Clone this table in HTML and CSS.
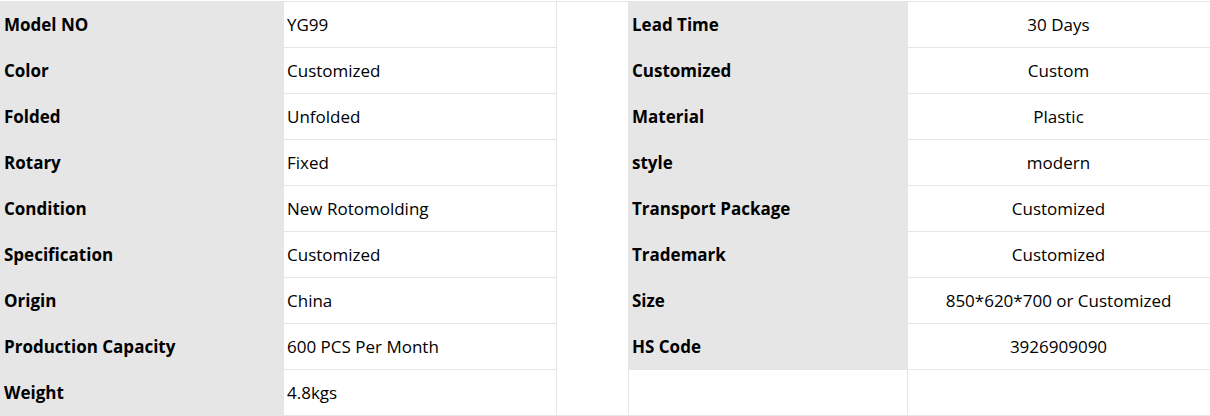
FILE: index.html
```html
<!DOCTYPE html>
<html>
<head>
<meta charset="utf-8">
<link rel="stylesheet" href="styles.css">
</head>
<body>
<table class="spec">
  <colgroup>
    <col class="c1"><col class="c2"><col class="c3"><col class="c4"><col class="c5">
  </colgroup>
  <tbody>
    <tr><td class="lbl">Model NO</td><td class="val">YG99</td><td class="gap" rowspan="9"></td><td class="lbl">Lead Time</td><td class="val ctr">30 Days</td></tr>
    <tr><td class="lbl">Color</td><td class="val">Customized</td><td class="lbl">Customized</td><td class="val ctr">Custom</td></tr>
    <tr><td class="lbl">Folded</td><td class="val">Unfolded</td><td class="lbl">Material</td><td class="val ctr">Plastic</td></tr>
    <tr><td class="lbl">Rotary</td><td class="val">Fixed</td><td class="lbl">style</td><td class="val ctr">modern</td></tr>
    <tr><td class="lbl">Condition</td><td class="val">New Rotomolding</td><td class="lbl">Transport Package</td><td class="val ctr">Customized</td></tr>
    <tr><td class="lbl">Specification</td><td class="val">Customized</td><td class="lbl">Trademark</td><td class="val ctr">Customized</td></tr>
    <tr><td class="lbl">Origin</td><td class="val">China</td><td class="lbl">Size</td><td class="val ctr">850*620*700 or Customized</td></tr>
    <tr><td class="lbl">Production Capacity</td><td class="val">600 PCS Per Month</td><td class="lbl">HS Code</td><td class="val ctr">3926909090</td></tr>
    <tr><td class="lbl">Weight</td><td class="val">4.8kgs</td><td class="val"></td><td class="val"></td></tr>
  </tbody>
</table>
</body>
</html>
```
FILE: styles.css
```css
html, body {
  margin: 0;
  padding: 0;
  background: #fff;
}
.spec {
  border-collapse: collapse;
  table-layout: fixed;
  width: 1210px;
  margin-top: 1px;
  font-family: "Open Sans", "Noto Sans", sans-serif;
  font-size: 17px;
  color: #000;
}
.c1 { width: 283px; }
.c2 { width: 273px; }
.c3 { width: 72px; }
.c4 { width: 279px; }
.c5 { width: 303px; }
.spec td {
  height: 46px;
  padding: 0 4px 0 3px;
  border: 1px solid #e6e6e6;
  vertical-align: middle;
  white-space: nowrap;
  box-sizing: border-box;
}
.spec td.lbl {
  background: #e6e6e6;
  font-weight: 700;
  padding-left: 3px;
}
.spec td.ctr {
  text-align: center;
}
.spec td.gap {
  background: #fff;
}
```
